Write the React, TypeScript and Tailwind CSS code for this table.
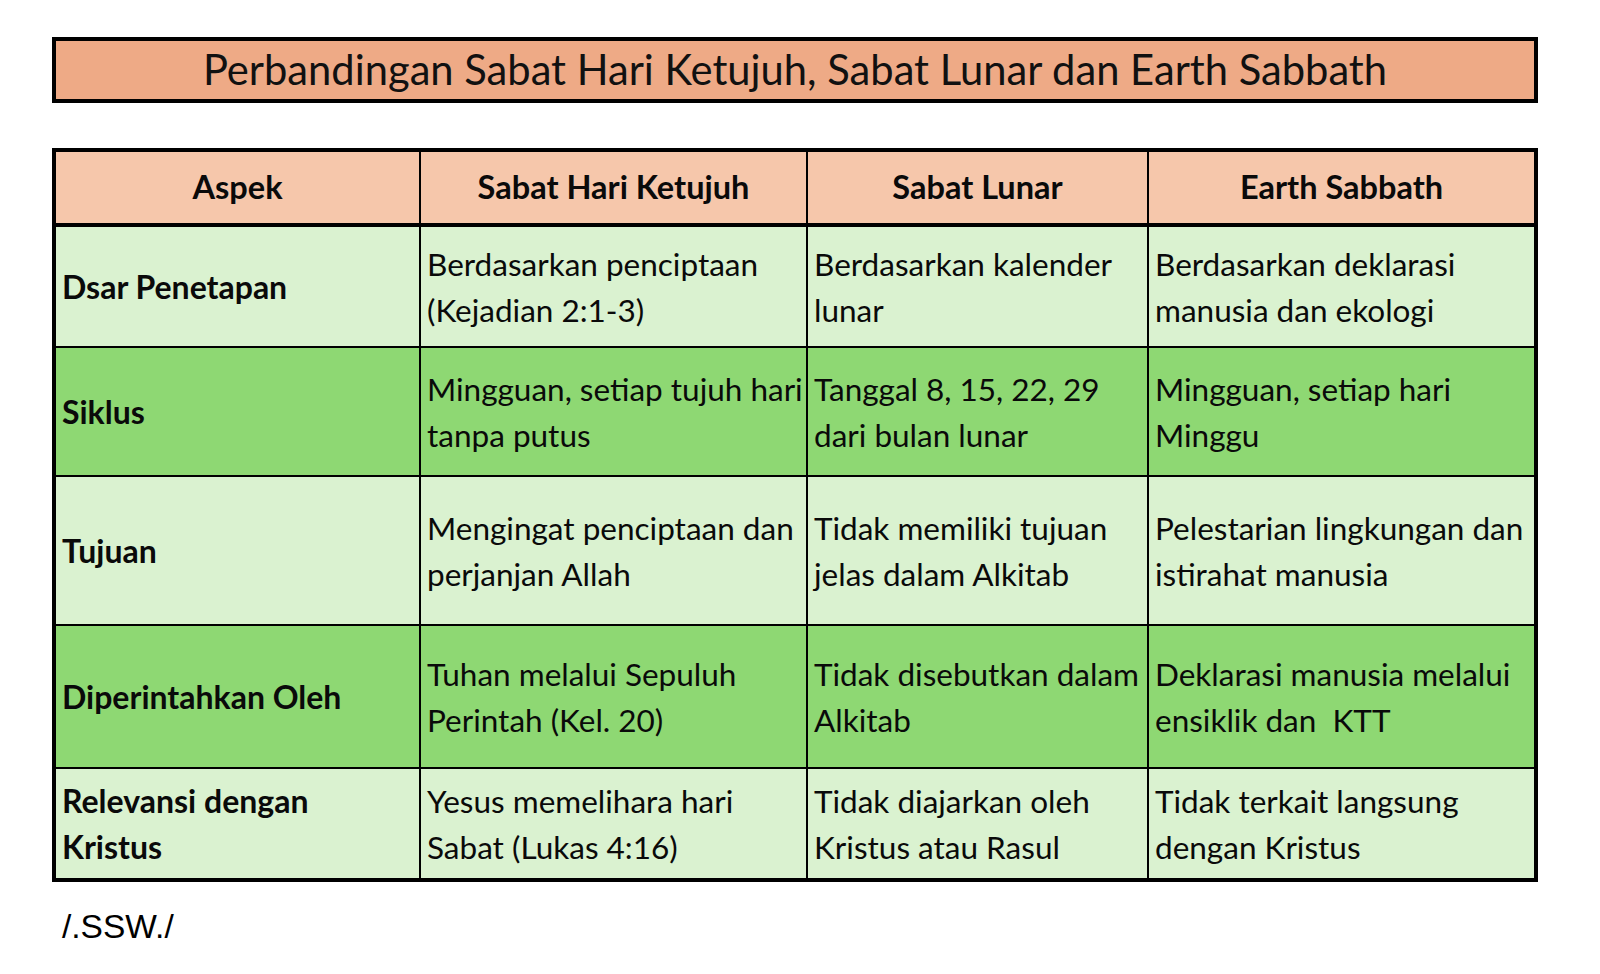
import React from "react";

type Row = { label: string[]; cells: string[][]; dark: boolean };

const rows: Row[] = [
  {
    label: ["Dsar Penetapan"],
    cells: [
      ["Berdasarkan penciptaan", "(Kejadian 2:1-3)"],
      ["Berdasarkan kalender", "lunar"],
      ["Berdasarkan deklarasi", "manusia dan ekologi"],
    ],
    dark: false,
  },
  {
    label: ["Siklus"],
    cells: [
      ["Mingguan, setiap tujuh hari", "tanpa putus"],
      ["Tanggal 8, 15, 22, 29", "dari bulan lunar"],
      ["Mingguan, setiap hari", "Minggu"],
    ],
    dark: true,
  },
  {
    label: ["Tujuan"],
    cells: [
      ["Mengingat penciptaan dan", "perjanjan Allah"],
      ["Tidak memiliki tujuan", "jelas dalam Alkitab"],
      ["Pelestarian lingkungan dan", "istirahat manusia"],
    ],
    dark: false,
  },
  {
    label: ["Diperintahkan Oleh"],
    cells: [
      ["Tuhan melalui Sepuluh", "Perintah (Kel. 20)"],
      ["Tidak disebutkan dalam", "Alkitab"],
      ["Deklarasi manusia melalui", "ensiklik dan\u00a0 KTT"],
    ],
    dark: true,
  },
  {
    label: ["Relevansi dengan", "Kristus"],
    cells: [
      ["Yesus memelihara hari", "Sabat (Lukas 4:16)"],
      ["Tidak diajarkan oleh", "Kristus atau Rasul"],
      ["Tidak terkait langsung", "dengan Kristus"],
    ],
    dark: false,
  },
];

const headers = ["Aspek", "Sabat Hari Ketujuh", "Sabat Lunar", "Earth Sabbath"];

function Lines({ lines }: { lines: string[] }) {
  return (
    <div>
      {lines.map((l, i) => (
        <div key={i} className="whitespace-nowrap">
          {l}
        </div>
      ))}
    </div>
  );
}

export default function App() {
  const font = { fontFamily: "Lato, 'Noto Sans', sans-serif" };
  return (
    <div className="w-[1600px] h-[974px] bg-white text-[#0a0a0a]" style={font}>
      <div className="pt-[37px] pl-[52px]">
        <div className="w-[1486px] h-[66px] border-4 border-black bg-[#eeaa86] flex items-center justify-center text-[41.7px] leading-none text-[#111]">
          Perbandingan Sabat Hari Ketujuh, Sabat Lunar dan Earth Sabbath
        </div>

        <div className="mt-[45px] w-[1486px] border-4 border-black bg-black grid grid-cols-[363px_385px_339px_385px] grid-rows-[73px_119px_127px_147px_141px_109px] gap-[2px]">
          {headers.map((h) => (
            <div
              key={h}
              className="bg-[#f6c7ab] border-b-2 border-black flex items-center justify-center font-bold text-[32.5px]"
            >
              {h}
            </div>
          ))}
          {rows.map((r, ri) => {
            const bg = r.dark ? "bg-[#8ed873]" : "bg-[#daf2d0]";
            return (
              <React.Fragment key={ri}>
                <div className={`${bg} flex items-center px-[6px] font-bold text-[32px] leading-[46px]`}>
                  <Lines lines={r.label} />
                </div>
                {r.cells.map((c, ci) => (
                  <div key={ci} className={`${bg} flex items-center px-[6px] text-[31.5px] leading-[46px]`}>
                    <Lines lines={c} />
                  </div>
                ))}
              </React.Fragment>
            );
          })}
        </div>

        <div
          className="mt-[28px] pl-[10px] text-[33.5px] leading-[33px] text-black"
          style={{ fontFamily: "'Liberation Sans', Arial, sans-serif" }}
        >
          /.SSW./
        </div>
      </div>
    </div>
  );
}
